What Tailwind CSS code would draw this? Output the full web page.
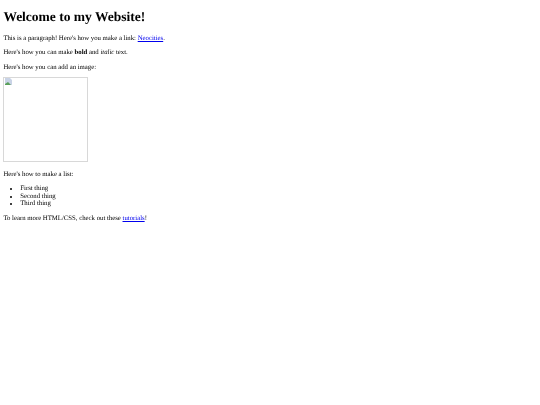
<!DOCTYPE html>
<html lang="en">
<head>
  <meta charset="UTF-8" />
  <title>The web site of me</title>
  <script src="https://cdn.jsdelivr.net/npm/@tailwindcss/browser@4"></script>
</head>
<body class="bg-white text-black font-['Liberation_Serif',serif] text-[6.75px] leading-[7.6px] mx-[3.375px] [text-rendering:geometricPrecision] blur-[0.35px]">
  <h1 class="text-[13.5px] leading-[15.6px] font-bold mt-[9.05px] mb-[9.05px]">Welcome to my Website!</h1>
  <p class="leading-[9.4px] mb-[5.1px]">This is a paragraph! Here's how you make a link: <a href="#" class="text-[#0000ee] underline">Neocities</a>.</p>
  <p class="leading-[9.4px] mb-[5.1px]">Here's how you can make <strong class="font-bold">bold</strong> and <em class="italic">italic</em> text.</p>
  <p class="leading-[9.4px] mb-[4.65px]">Here's how you can add an image:</p>
  <div class="w-[84.4px] h-[85px] border border-[#d8d8d8] mb-[7.85px]">
    <!-- broken image icon -->
    <svg width="7" height="7" viewBox="0 0 7 7" class="block mt-[0.5px] ml-[0.5px]">
      <path d="M0 0H5L7 2V7H0Z" fill="#c9d3e6" />
      <path d="M0 6L3 4L6 7H0Z" fill="#5aa05a" />
    </svg>
  </div>
  <p class="leading-[9.4px] mb-[4.95px]">Here's how to make a list:</p>
  <ul class="list-disc pl-[16.875px] pt-[1.2px] mb-[5.75px] leading-[7.6px]">
    <li>First thing</li>
    <li>Second thing</li>
    <li>Third thing</li>
  </ul>
  <p class="leading-[9.4px]">To learn more HTML/CSS, check out these <a href="#" class="text-[#0000ee] underline">tutorials</a>!</p>
</body>
</html>
